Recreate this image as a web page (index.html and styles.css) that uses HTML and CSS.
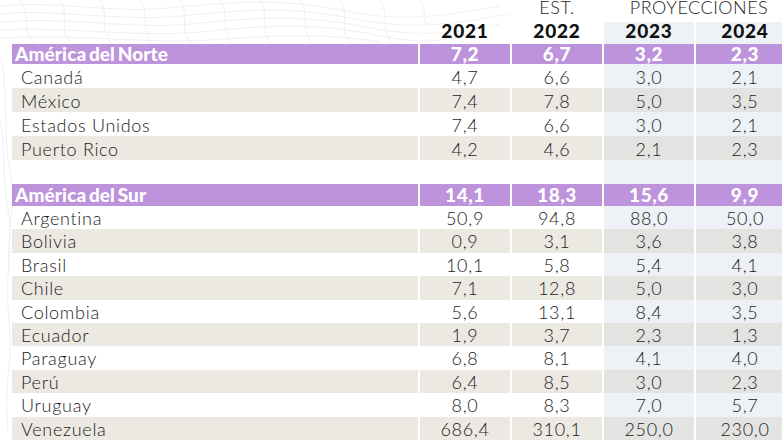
FILE: index.html
```html
<!DOCTYPE html>
<html lang="es">
<head>
<meta charset="utf-8">
<link rel="stylesheet" href="styles.css">
</head>
<body>
<div class="sheet">
  <svg class="mesh" width="520" height="442" viewBox="0 0 520 442" fill="none" stroke="#f0f0f2" stroke-width="1">
    <path d="M0 6 C60 0 110 14 170 8 S280 -2 340 10 S430 18 500 6"/>
    <path d="M0 14 C50 8 120 22 180 16 S290 6 350 18 S440 26 510 14"/>
    <path d="M0 22 C70 16 130 30 190 24 S300 14 360 26 S450 34 500 24"/>
    <path d="M0 30 C60 26 140 38 200 32 S310 22 370 34 S440 40 470 34"/>
    <path d="M0 38 C80 34 150 44 210 40 S320 32 380 42"/>
    <path d="M20 0 C30 15 22 30 34 44"/><path d="M60 0 C70 14 58 30 72 44"/>
    <path d="M100 0 C110 16 98 28 112 44"/><path d="M140 0 C150 14 140 30 152 44"/>
    <path d="M180 0 C190 16 178 30 192 44"/><path d="M220 0 C230 14 220 30 232 44"/>
    <path d="M260 0 C270 16 258 28 272 44"/><path d="M300 0 C310 14 300 30 312 44"/>
    <path d="M340 0 C350 16 338 30 352 44"/><path d="M380 0 C390 14 380 30 392 44"/>
    <path d="M420 0 C430 16 418 28 432 22"/>
    <path d="M0 120 C6 150 2 180 8 210 S4 280 9 320 S3 380 8 430"/>
    <path d="M2 60 C8 100 3 140 10 170 S5 240 10 270"/>
  </svg>
  <table class="grid">
    <colgroup>
      <col class="c-label"><col class="c-num"><col class="c-num"><col class="c-num"><col class="c-last">
    </colgroup>
    <thead>
      <tr class="h-top">
        <th></th><th></th><th class="thin">EST.</th><th class="thin" colspan="2">PROYECCIONES</th>
      </tr>
      <tr class="h-year">
        <th></th><th>2021</th><th>2022</th><th class="proj">2023</th><th class="proj">2024</th>
      </tr>
    </thead>
    <tbody class="north">
      <tr class="region"><td>América del Norte</td><td>7,2</td><td>6,7</td><td>3,2</td><td>2,3</td></tr>
      <tr><td>Canadá</td><td>4,7</td><td>6,6</td><td class="proj">3,0</td><td class="proj">2,1</td></tr>
      <tr class="alt"><td>México</td><td>7,4</td><td>7,8</td><td class="proj">5,0</td><td class="proj">3,5</td></tr>
      <tr><td>Estados Unidos</td><td>7,4</td><td>6,6</td><td class="proj">3,0</td><td class="proj">2,1</td></tr>
      <tr class="alt"><td>Puerto Rico</td><td>4,2</td><td>4,6</td><td class="proj">2,1</td><td class="proj">2,3</td></tr>
      <tr class="gap"><td></td><td></td><td></td><td class="proj"></td><td class="proj"></td></tr>
    </tbody>
    <tbody class="south">
      <tr class="region"><td>América del Sur</td><td>14,1</td><td>18,3</td><td>15,6</td><td>9,9</td></tr>
      <tr><td>Argentina</td><td>50,9</td><td>94,8</td><td class="proj">88,0</td><td class="proj">50,0</td></tr>
      <tr class="alt"><td>Bolivia</td><td>0,9</td><td>3,1</td><td class="proj">3,6</td><td class="proj">3,8</td></tr>
      <tr><td>Brasil</td><td>10,1</td><td>5,8</td><td class="proj">5,4</td><td class="proj">4,1</td></tr>
      <tr class="alt"><td>Chile</td><td>7,1</td><td>12,8</td><td class="proj">5,0</td><td class="proj">3,0</td></tr>
      <tr><td>Colombia</td><td>5,6</td><td>13,1</td><td class="proj">8,4</td><td class="proj">3,5</td></tr>
      <tr class="alt"><td>Ecuador</td><td>1,9</td><td>3,7</td><td class="proj">2,3</td><td class="proj">1,3</td></tr>
      <tr><td>Paraguay</td><td>6,8</td><td>8,1</td><td class="proj">4,1</td><td class="proj">4,0</td></tr>
      <tr class="alt"><td>Perú</td><td>6,4</td><td>8,5</td><td class="proj">3,0</td><td class="proj">2,3</td></tr>
      <tr><td>Uruguay</td><td>8,0</td><td>8,3</td><td class="proj">7,0</td><td class="proj">5,7</td></tr>
      <tr class="alt"><td>Venezuela</td><td>686,4</td><td>310,1</td><td class="proj">250,0</td><td class="proj">230,0</td></tr>
    </tbody>
  </table>
</div>
</body>
</html>
```
FILE: styles.css
```css
html, body {
  margin: 0;
  padding: 0;
  background: #ffffff;
}
.sheet {
  position: relative;
  width: 782px;
  height: 442px;
  overflow: hidden;
  background: #ffffff;
}
.mesh {
  position: absolute;
  left: 0;
  top: 0;
}
.grid {
  position: relative;
  margin-left: 12px;
  width: 782px;
  table-layout: fixed;
  border-collapse: collapse;
  font-family: "Lato", "Open Sans", sans-serif;
  font-size: 18px;
  font-weight: 300;
  color: #1c1c1c;
  letter-spacing: 0.7px;
}
.c-label { width: 407px; }
.c-num { width: 92px; }
.c-last { width: 99px; }
.grid th, .grid td {
  padding: 0;
  text-align: center;
  vertical-align: top;
}
.grid td + td, .grid th + th {
  border-left: 2px solid #ffffff;
}
.grid td:first-child {
  text-align: left;
  padding-left: 9px;
}
.h-top th {
  line-height: 14px;
  padding-bottom: 8px;
}
.h-top .thin {
  font-weight: 300;
  font-size: 18px;
  letter-spacing: 0.5px;
}
.h-year th {
  font-weight: 900;
  font-size: 19px;
  color: #111111;
  letter-spacing: 0.8px;
  line-height: 17px;
  padding-bottom: 5px;
}
.proj {
  background: #eef1f6;
}
.north td {
  line-height: 22px;
  padding-top: 2px;
}
.south td {
  line-height: 21.4px;
  padding-top: 2px;
}
.gap td {
  height: 24px;
  padding-top: 0;
}
.region td {
  background: #bd93dc;
  color: #ffffff;
  font-weight: 900;
  font-size: 19px;
  letter-spacing: 0.6px;
  line-height: 19px;
  padding-top: 0;
  padding-bottom: 1px;
}
.south .region td {
  line-height: 21px;
}
.region td:first-child {
  padding-left: 3px;
  letter-spacing: 0.1px;
  word-spacing: -2px;
}
.alt td { background: #ebe9e1; }
.alt td.proj { background: #e3e4e1; }
```
